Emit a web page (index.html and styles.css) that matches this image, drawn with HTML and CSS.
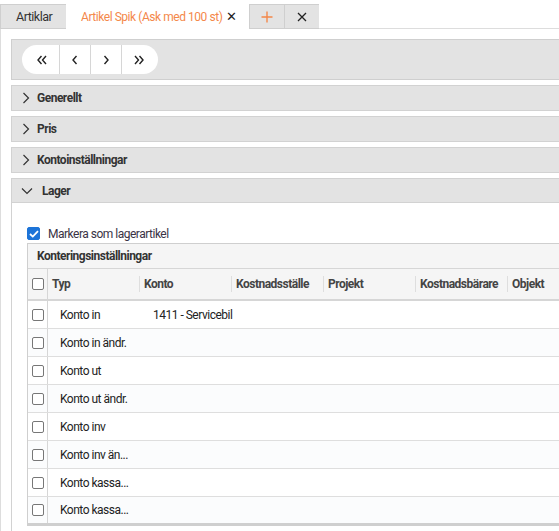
FILE: index.html
```html
<html>
<head>
    <link rel="stylesheet" href="styles.css">
</head>
<body>
    <div class="tabs">
        <div class="tab">Artiklar</div>
        <div class="tab active">Artikel Spik (Ask med 100 st) <span class="tab-x">&#x2715;</span></div>
        <div class="tab icon plus">
            <svg width="12" height="12" viewBox="0 0 12 12"><path d="M6 0.5V11.5M0.5 6H11.5" stroke="#f4884a" stroke-width="1.4"/></svg>
        </div>
        <div class="tab icon">
            <svg width="10" height="10" viewBox="0 0 10 10"><path d="M1 1L9 9M9 1L1 9" stroke="#222" stroke-width="1.3"/></svg>
        </div>
        <div class="tab-fill"></div>
    </div>

    <div class="content">
        <div class="navbar">
            <div class="pager">
                <button><svg width="12" height="10" viewBox="0 0 12 10"><path d="M5.5 1L2 5L5.5 9M10 1L6.5 5L10 9" fill="none" stroke="#222" stroke-width="1.4"/></svg></button>
                <button><svg width="8" height="10" viewBox="0 0 8 10"><path d="M5.5 1L2 5L5.5 9" fill="none" stroke="#222" stroke-width="1.4"/></svg></button>
                <button><svg width="8" height="10" viewBox="0 0 8 10"><path d="M2.5 1L6 5L2.5 9" fill="none" stroke="#222" stroke-width="1.4"/></svg></button>
                <button><svg width="12" height="10" viewBox="0 0 12 10"><path d="M2 1L5.5 5L2 9M6.5 1L10 5L6.5 9" fill="none" stroke="#222" stroke-width="1.4"/></svg></button>
            </div>
        </div>

        <div class="panel-head"><svg class="chev" width="10" height="12" viewBox="0 0 10 12"><path d="M2.5 1L7.5 6L2.5 11" fill="none" stroke="#333" stroke-width="1.2"/></svg>Generellt</div>
        <div class="panel-head"><svg class="chev" width="10" height="12" viewBox="0 0 10 12"><path d="M2.5 1L7.5 6L2.5 11" fill="none" stroke="#333" stroke-width="1.2"/></svg>Pris</div>
        <div class="panel-head"><svg class="chev" width="10" height="12" viewBox="0 0 10 12"><path d="M2.5 1L7.5 6L2.5 11" fill="none" stroke="#333" stroke-width="1.2"/></svg>Kontoinställningar</div>
        <div class="panel-head open"><svg class="chev" width="12" height="10" viewBox="0 0 12 10"><path d="M1 2.5L6 7.5L11 2.5" fill="none" stroke="#333" stroke-width="1.2"/></svg>Lager</div>

        <div class="panel-body">
            <label class="check-row">
                <span class="cb checked"><svg width="10" height="8" viewBox="0 0 10 8"><path d="M1 4L3.8 6.6L9 1.2" fill="none" stroke="#fff" stroke-width="1.8"/></svg></span>
                Markera som lagerartikel
            </label>

            <div class="grid">
                <div class="grid-title">Konteringsinställningar</div>
                <div class="grid-row grid-header">
                    <div class="sel"><span class="cb"></span></div>
                    <div class="col first">Typ</div>
                    <div class="col">Konto</div>
                    <div class="col">Kostnadsställe</div>
                    <div class="col">Projekt</div>
                    <div class="col">Kostnadsbärare</div>
                    <div class="col">Objekt</div>
                </div>
                <div class="grid-row">
                    <div class="sel"><span class="cb"></span></div>
                    <div class="cell typ">Konto in</div>
                    <div class="cell konto">1411 - Servicebil</div>
                </div>
                <div class="grid-row alt">
                    <div class="sel"><span class="cb"></span></div>
                    <div class="cell typ">Konto in ändr.</div>
                </div>
                <div class="grid-row">
                    <div class="sel"><span class="cb"></span></div>
                    <div class="cell typ">Konto ut</div>
                </div>
                <div class="grid-row alt">
                    <div class="sel"><span class="cb"></span></div>
                    <div class="cell typ">Konto ut ändr.</div>
                </div>
                <div class="grid-row">
                    <div class="sel"><span class="cb"></span></div>
                    <div class="cell typ">Konto inv</div>
                </div>
                <div class="grid-row alt">
                    <div class="sel"><span class="cb"></span></div>
                    <div class="cell typ">Konto inv än...</div>
                </div>
                <div class="grid-row">
                    <div class="sel"><span class="cb"></span></div>
                    <div class="cell typ">Konto kassa...</div>
                </div>
                <div class="grid-row alt">
                    <div class="sel"><span class="cb"></span></div>
                    <div class="cell typ">Konto kassa...</div>
                </div>
            </div>
        </div>
    </div>
</body>
</html>
```

FILE: styles.css
```css
body {
    margin: 0;
    font-family: Roboto, "Liberation Sans", sans-serif;
    font-size: 12px;
    letter-spacing: -0.5px;
    color: #333;
    background-color: #fff;
    overflow: hidden;
}

.tabs {
    display: flex;
    margin-top: 4px;
    height: 25px;
}

.tab {
    display: flex;
    align-items: center;
    flex-shrink: 0;
    white-space: nowrap;
    padding: 0 14px 0 15px;
    background-color: #e3e3e3;
    border: 1px solid #cfcfcf;
    border-right: none;
    box-sizing: border-box;
    height: 25px;
    font-size: 12.5px;
    color: #333;
}

.tab:first-child {
    width: 66px;
}

.tab.active {
    background-color: #fff;
    border: none;
    color: #f4884a;
    font-size: 12px;
    letter-spacing: -0.45px;
    padding: 0 12px 0 15px;
    width: 183px;
}

.tab-x {
    color: #222;
    font-size: 13px;
    margin-left: auto;
}

.tab.icon {
    width: 35px;
    padding: 0;
    justify-content: center;
}

.tab.icon:last-of-type {
    border-right: 1px solid #cfcfcf;
}

.tab-fill {
    flex: 1;
    border-bottom: 1px solid #ddd;
}

.content {
    border-left: 1px solid #ddd;
    padding: 10px 0 0 10px;
    min-height: calc(100vh - 29px);
    box-sizing: border-box;
    display: flex;
    flex-direction: column;
}

.navbar {
    background-color: #e3e3e3;
    border: 1px solid #cfcfcf;
    border-right: none;
    height: 41px;
    box-sizing: border-box;
    padding: 5px 10px;
}

.pager {
    display: flex;
    width: 136px;
    height: 29px;
    background-color: #fff;
    border-radius: 15px;
    overflow: hidden;
}

.pager button {
    flex: 1;
    border: none;
    background: transparent;
    border-left: 1px solid #d6d6d6;
    display: flex;
    align-items: center;
    justify-content: center;
    padding: 0;
}

.pager button:first-child {
    border-left: none;
    flex: 0 0 37px;
    padding-left: 3px;
}

.pager button:last-child {
    flex: 0 0 37px;
    padding-right: 3px;
}

.panel-head {
    display: flex;
    align-items: center;
    height: 26px;
    box-sizing: border-box;
    margin-top: 5px;
    padding-left: 9px;
    background-color: #e3e3e3;
    border: 1px solid #d2d2d2;
    border-right: none;
    font-weight: 700;
    font-size: 12px;
    color: #333;
}

.panel-head .chev {
    margin-right: 6px;
}

.panel-head.open {
    height: 25px;
}

.panel-head.open .chev {
    margin-right: 9px;
}

.panel-body {
    flex: 1;
    border-left: 1px solid #d2d2d2;
    padding: 22px 0 0 15px;
}

.check-row {
    display: flex;
    align-items: center;
    gap: 8px;
    height: 17px;
    font-size: 12px;
    color: #3a3345;
}

.cb {
    display: inline-flex;
    align-items: center;
    justify-content: center;
    width: 12px;
    height: 12px;
    border: 1px solid #777;
    border-radius: 2px;
    box-sizing: border-box;
    background-color: #fff;
}

.cb.checked {
    background-color: #1d74d8;
    border-color: #1d74d8;
    width: 13px;
    height: 13px;
}

.grid {
    border: 1px solid #cfcfcf;
    border-right: none;
    margin-top: 1px;
    overflow: hidden;
}

.grid-title {
    height: 24px;
    line-height: 24px;
    background-color: #f5f5f5;
    padding-left: 9px;
    font-weight: 700;
    border-bottom: 1px solid #d6d6d6;
}

.grid-row {
    display: flex;
    height: 28px;
    border-bottom: 1px solid #dedede;
    box-sizing: border-box;
    background-color: #fff;
}

.grid-row.alt {
    background-color: #fbfcfd;
}

.grid-row:last-child {
    border-bottom: 2px solid #cfcfcf;
}

.grid-header {
    height: 32px;
    background-color: #f5f5f5;
    border-bottom: 2px solid #d6d6d6;
}

.sel {
    width: 19px;
    display: flex;
    align-items: center;
    justify-content: center;
    border-right: 1px solid #d6d6d6;
    flex-shrink: 0;
}

.col {
    width: 92px;
    flex-shrink: 0;
    display: flex;
    align-items: center;
    box-sizing: border-box;
    padding-left: 4px;
    border-left: 1px solid #dedede;
    font-weight: 700;
    color: #444;
    margin: 7px 0;
}

.col.first {
    border-left: none;
    width: 91px;
}

.cell {
    display: flex;
    align-items: center;
    white-space: nowrap;
    color: #222;
}

.cell.typ {
    width: 92px;
    flex-shrink: 0;
    padding-left: 12px;
    box-sizing: border-box;
}

.cell.konto {
    padding-left: 13px;
}
```
